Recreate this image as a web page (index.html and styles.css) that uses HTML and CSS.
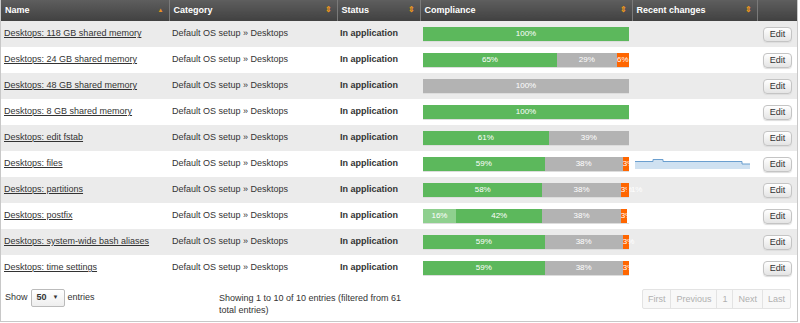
FILE: index.html
```html
<!DOCTYPE html>
<html lang="en">
<head>
	<meta charset="UTF-8"/>
	<title>Rules</title>
	<link rel="stylesheet" href="styles.css">
</head>
<body>
<div class="rules_wrap">
	<table class="rules">
		<thead>
			<tr>
				<th class="c_name">Name <span class="sort asc">&#9650;</span></th>
				<th class="c_cat">Category <span class="sort">&#8661;</span></th>
				<th class="c_status">Status <span class="sort">&#8661;</span></th>
				<th class="c_comp">Compliance <span class="sort">&#8661;</span></th>
				<th class="c_recent">Recent changes <span class="sort">&#8661;</span></th>
				<th class="c_edit"></th>
			</tr>
		</thead>
		<tbody>
			<tr>
				<td><a href="#">Desktops: 118 GB shared memory</a></td>
				<td>Default OS setup &raquo; Desktops</td>
				<td class="status">In application</td>
				<td><div class="bar"><span class="ok" style="width:100%">100%</span></div></td>
				<td></td>
				<td><button class="edit">Edit</button></td>
			</tr>
			<tr>
				<td><a href="#">Desktops: 24 GB shared memory</a></td>
				<td>Default OS setup &raquo; Desktops</td>
				<td class="status">In application</td>
				<td><div class="bar"><span class="ok" style="width:65%">65%</span><span class="na" style="width:29%">29%</span><span class="err" style="width:6%">6%</span></div></td>
				<td></td>
				<td><button class="edit">Edit</button></td>
			</tr>
			<tr>
				<td><a href="#">Desktops: 48 GB shared memory</a></td>
				<td>Default OS setup &raquo; Desktops</td>
				<td class="status">In application</td>
				<td><div class="bar"><span class="na" style="width:100%">100%</span></div></td>
				<td></td>
				<td><button class="edit">Edit</button></td>
			</tr>
			<tr>
				<td><a href="#">Desktops: 8 GB shared memory</a></td>
				<td>Default OS setup &raquo; Desktops</td>
				<td class="status">In application</td>
				<td><div class="bar"><span class="ok" style="width:100%">100%</span></div></td>
				<td></td>
				<td><button class="edit">Edit</button></td>
			</tr>
			<tr>
				<td><a href="#">Desktops: edit fstab</a></td>
				<td>Default OS setup &raquo; Desktops</td>
				<td class="status">In application</td>
				<td><div class="bar"><span class="ok" style="width:61%">61%</span><span class="na" style="width:39%">39%</span></div></td>
				<td></td>
				<td><button class="edit">Edit</button></td>
			</tr>
			<tr>
				<td><a href="#">Desktops: files</a></td>
				<td>Default OS setup &raquo; Desktops</td>
				<td class="status">In application</td>
				<td><div class="bar"><span class="ok" style="width:59%">59%</span><span class="na" style="width:38%">38%</span><span class="err" style="width:3%">3%</span></div></td>
				<td>
					<svg class="spark" width="116" height="12" viewBox="0 0 116 12">
						<path d="M0 3.5 H18 V1.5 H28 V3.5 H107 V6 H115 V11 H0 Z" fill="#cfe1f1"/>
						<path d="M0 3.5 H18 V1.5 H28 V3.5 H107 V6 H115" fill="none" stroke="#6b9fcf" stroke-width="1"/>
					</svg>
				</td>
				<td><button class="edit">Edit</button></td>
			</tr>
			<tr>
				<td><a href="#">Desktops: partitions</a></td>
				<td>Default OS setup &raquo; Desktops</td>
				<td class="status">In application</td>
				<td><div class="bar"><span class="ok" style="width:58%">58%</span><span class="na" style="width:38%">38%</span><span class="err" style="width:3%">3%</span><span class="miss" style="width:1%">1%</span></div></td>
				<td></td>
				<td><button class="edit">Edit</button></td>
			</tr>
			<tr>
				<td><a href="#">Desktops: postfix</a></td>
				<td>Default OS setup &raquo; Desktops</td>
				<td class="status">In application</td>
				<td><div class="bar"><span class="rep" style="width:16%">16%</span><span class="ok" style="width:42%">42%</span><span class="na" style="width:38%">38%</span><span class="err" style="width:3%">3%</span></div></td>
				<td></td>
				<td><button class="edit">Edit</button></td>
			</tr>
			<tr>
				<td><a href="#">Desktops: system-wide bash aliases</a></td>
				<td>Default OS setup &raquo; Desktops</td>
				<td class="status">In application</td>
				<td><div class="bar"><span class="ok" style="width:59%">59%</span><span class="na" style="width:38%">38%</span><span class="err" style="width:3%">3%</span></div></td>
				<td></td>
				<td><button class="edit">Edit</button></td>
			</tr>
			<tr>
				<td><a href="#">Desktops: time settings</a></td>
				<td>Default OS setup &raquo; Desktops</td>
				<td class="status">In application</td>
				<td><div class="bar"><span class="ok" style="width:59%">59%</span><span class="na" style="width:38%">38%</span><span class="err" style="width:3%">3%</span></div></td>
				<td></td>
				<td><button class="edit">Edit</button></td>
			</tr>
		</tbody>
	</table>
	<div class="rules_foot">
		<div class="length">Show <span class="select">50 <i>&#9660;</i></span> entries</div>
		<div class="info">Showing 1 to 10 of 10 entries (filtered from 61 total entries)</div>
		<ul class="paging">
			<li>First</li>
			<li>Previous</li>
			<li>1</li>
			<li>Next</li>
			<li>Last</li>
		</ul>
	</div>
</div>
</body>
</html>
```

FILE: styles.css
```css
*{margin:0;padding:0;box-sizing:border-box;}
body{font:9px/1.3 "Liberation Sans", Arial, sans-serif;color:#333;background:#fff;}
ul,li{list-style:none;}
.rules_wrap{width:798px;height:322px;border:1px solid #c8c8c8;border-top:0;}
.rules{width:100%;border-collapse:collapse;table-layout:fixed;}
.rules th{height:21px;padding:0 4px;text-align:left;font-weight:bold;color:#fff;background:linear-gradient(#5e5e5e,#414141);border-left:1px solid #7a7a7a;white-space:nowrap;position:relative;}
.rules th:first-child{border-left:0;}
.rules th .sort{position:absolute;right:5px;top:5px;font-size:8px;color:#e8951f;}
.rules th .sort.asc{font-size:6px;top:7px;}
.c_name{width:168px;}
.c_cat{width:168px;}
.c_status{width:83px;}
.c_comp{width:212px;}
.c_recent{width:125px;}
.rules td{height:26px;padding:0 3px;white-space:nowrap;overflow:visible;}
.rules tbody tr:nth-child(odd) td{background:#ebebeb;}
.rules td a{color:#333;}
.rules td.status{font-weight:bold;}
.bar{display:flex;width:206px;height:15px;border-bottom:1px solid #ddd;}
.bar span{height:14px;line-height:14px;text-align:center;color:#fff;font-size:8px;overflow:visible;white-space:nowrap;}
.bar .ok{background:#5cb85c;}
.bar .na{background:#b3b3b3;}
.bar .err{background:#ff6600;}
.bar .rep{background:#8fd08f;}
.bar .miss{background:#ff6600;text-align:left;text-indent:4px;}
.spark{display:block;}
.edit{display:block;margin-left:auto;margin-right:2px;width:29px;height:15px;font:9px "Liberation Sans", Arial, sans-serif;color:#333;background:linear-gradient(#fff,#e4e4e4);border:1px solid #c4c4c4;border-radius:4px;box-shadow:0 1px 1px #ddd;}
.rules_foot{display:flex;align-items:flex-start;padding:8px 6px 0 4px;}
.length{display:flex;align-items:center;gap:3px;width:214px;}
.select{display:inline-flex;justify-content:space-between;align-items:center;width:34px;height:18px;padding:0 5px;font-weight:bold;background:linear-gradient(#fff,#eee);border:1px solid #bbb;border-radius:2px;}
.select i{font-style:normal;font-size:6px;}
.info{width:200px;padding-top:3px;line-height:12px;}
.paging{display:flex;margin-left:auto;border:1px solid #e3e3e3;border-radius:2px;background:#f8f8f8;}
.paging li{height:18px;line-height:18px;padding:0 5px;color:#b0b0b0;border-left:1px solid #e3e3e3;}
.paging li:first-child{border-left:0;}
```
